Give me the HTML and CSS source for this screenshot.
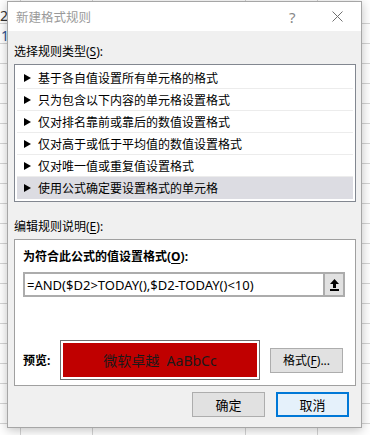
FILE: index.html
```html
<!DOCTYPE html>
<html lang="zh-CN">

<head>
    <meta charset="UTF-8">
    <meta name="viewport" content="width=device-width, initial-scale=1.0">
    <title>新建格式规则</title>
    <link rel="stylesheet" href="styles.css">
</head>

<body>
    <!-- Sheet behind the dialog -->
    <div class="sheet">
        <div class="cell">2</div>
        <div class="cell blue">1</div>
    </div>

    <div class="dialog">
        <div class="titlebar">
            <span class="title">新建格式规则</span>
            <span class="help">?</span>
            <span class="close">
                <svg width="11" height="11" viewBox="0 0 11 11">
                    <path d="M0.5 0.5 L10.5 10.5 M10.5 0.5 L0.5 10.5" stroke="#707070" stroke-width="1" fill="none" />
                </svg>
            </span>
        </div>

        <div class="content">
            <div class="label">选择规则类型(<u>S</u>):</div>
            <ul class="rules">
                <li><span class="arrow"></span>基于各自值设置所有单元格的格式</li>
                <li><span class="arrow"></span>只为包含以下内容的单元格设置格式</li>
                <li><span class="arrow"></span>仅对排名靠前或靠后的数值设置格式</li>
                <li><span class="arrow"></span>仅对高于或低于平均值的数值设置格式</li>
                <li><span class="arrow"></span>仅对唯一值或重复值设置格式</li>
                <li class="selected"><span class="arrow"></span>使用公式确定要设置格式的单元格</li>
            </ul>

            <div class="label label-edit">编辑规则说明(<u>E</u>):</div>
            <div class="panel">
                <div class="panel-title">为符合此公式的值设置格式(<u>O</u>):</div>
                <div class="formula">
                    <span class="formula-text">=AND($D2&gt;TODAY(),$D2-TODAY()&lt;10)</span>
                    <span class="collapse">
                        <svg width="9" height="12" viewBox="0 0 9 12">
                            <path d="M4.5 0 L9 5 L6 5 L6 9 L3 9 L3 5 L0 5 Z" fill="#000" />
                            <rect x="0" y="10" width="9" height="2" fill="#000" />
                        </svg>
                    </span>
                </div>
                <div class="preview-row">
                    <span class="preview-label">预览:</span>
                    <div class="preview">
                        <div class="preview-fill">微软卓越&nbsp; AaBbCc</div>
                    </div>
                    <button class="btn btn-format">格式(<u>F</u>)...</button>
                </div>
            </div>

            <div class="footer">
                <button class="btn">确定</button>
                <button class="btn btn-default">取消</button>
            </div>
        </div>
    </div>
</body>

</html>
```

FILE: styles.css
```css
body {
    margin: 0;
    width: 370px;
    height: 435px;
    overflow: hidden;
    position: relative;
    font-family: "Noto Sans", "Noto Sans CJK SC", sans-serif;
    font-size: 12px;
    color: #000;
    background-color: #fff;
    background-image:
        linear-gradient(#d4d4d4, #d4d4d4),
        linear-gradient(#d4d4d4, #d4d4d4),
        linear-gradient(#d4d4d4, #d4d4d4),
        linear-gradient(#d4d4d4, #d4d4d4),
        repeating-linear-gradient(to bottom, transparent 0 19px, #d4d4d4 19px 20px);
    background-size: 1px 100%, 1px 100%, 1px 100%, 1px 100%, 100% 100%;
    background-position: 20px 0, 92px 0, 245px 0, 317px 0, 0 4px;
    background-repeat: no-repeat, no-repeat, no-repeat, no-repeat, repeat;
}

.sheet {
    padding-top: 6px;
}

.cell {
    height: 20px;
    line-height: 20px;
    font-size: 14px;
    color: #333;
}

.cell.blue {
    color: #2d4f8f;
    padding-left: 1px;
}

/* dialog */
.dialog {
    position: absolute;
    left: 7px;
    top: 1px;
    width: 355px;
    height: 427px;
    box-sizing: border-box;
    border: 1px solid #a6a6a6;
    background: #f0f0f0;
    box-shadow: 0 2px 10px rgba(0, 0, 0, 0.25);
}

.titlebar {
    height: 29px;
    background: #fff;
    display: flex;
    align-items: center;
    padding-left: 8px;
}

.title {
    flex: 1;
    color: #9a9a9a;
    font-size: 12.5px;
}

.help {
    color: #888;
    font-size: 15px;
    width: 10px;
    margin-right: 33px;
}

.close {
    display: flex;
    margin-right: 18px;
}

.content {
    padding: 13px 5px 0 6px;
}

.label {
    line-height: 16px;
    height: 16px;
}

.label-edit {
    margin-top: 17px;
}

u {
    text-decoration: underline;
    text-underline-offset: 2px;
}

.rules {
    list-style: none;
    margin: 4px 0 0;
    padding: 2px;
    background: #fff;
    border: 1px solid #828790;
}

.rules li {
    height: 22px;
    box-sizing: border-box;
    border-bottom: 1px solid #ececec;
    display: flex;
    align-items: center;
    padding-left: 7px;
}

.rules li.selected {
    background: #dcdce2;
    border-bottom: none;
}

.arrow {
    width: 0;
    height: 0;
    border-top: 4.5px solid transparent;
    border-bottom: 4.5px solid transparent;
    border-left: 7px solid #000;
    margin-right: 7px;
}

.panel {
    margin-top: 4px;
    height: 147px;
    box-sizing: border-box;
    border: 1px solid #a0a0a0;
    background: #fff;
    padding: 9px 10px 0 8px;
}

.panel-title {
    font-weight: bold;
    line-height: 16px;
    height: 16px;
}

.formula {
    margin-top: 7px;
    height: 25px;
    box-sizing: border-box;
    border: 2px solid #acacac;
    display: flex;
    align-items: center;
}

.formula-text {
    flex: 1;
    padding-left: 2px;
    font-size: 13px;
    white-space: nowrap;
}

.collapse {
    width: 20px;
    height: 100%;
    box-sizing: border-box;
    border-left: 2px solid #acacac;
    background: #e1e1e1;
    display: flex;
    align-items: center;
    justify-content: center;
}

.preview-row {
    margin-top: 43px;
    display: flex;
    align-items: center;
}

.preview-label {
    font-weight: bold;
    width: 37px;
}

.preview {
    width: 200px;
    height: 40px;
    box-sizing: border-box;
    border: 1px solid #6e6e6e;
    padding: 2px;
    background: #fff;
}

.preview-fill {
    height: 100%;
    background: #c00000;
    color: #1a1a1a;
    font-size: 14px;
    display: flex;
    align-items: center;
    justify-content: center;
}

.btn {
    width: 73px;
    height: 25px;
    box-sizing: border-box;
    border: 1px solid #adadad;
    background: #e1e1e1;
    font-family: inherit;
    font-size: 13px;
    color: #000;
    padding: 0;
}

.btn-format {
    margin-left: 10px;
    font-size: 12px;
}

.btn-default {
    border: 2px solid #0078d7;
    background: #e5f1fb;
}

.footer {
    display: flex;
    justify-content: flex-end;
    gap: 11px;
    margin-top: 6px;
    padding-right: 7px;
}
```
